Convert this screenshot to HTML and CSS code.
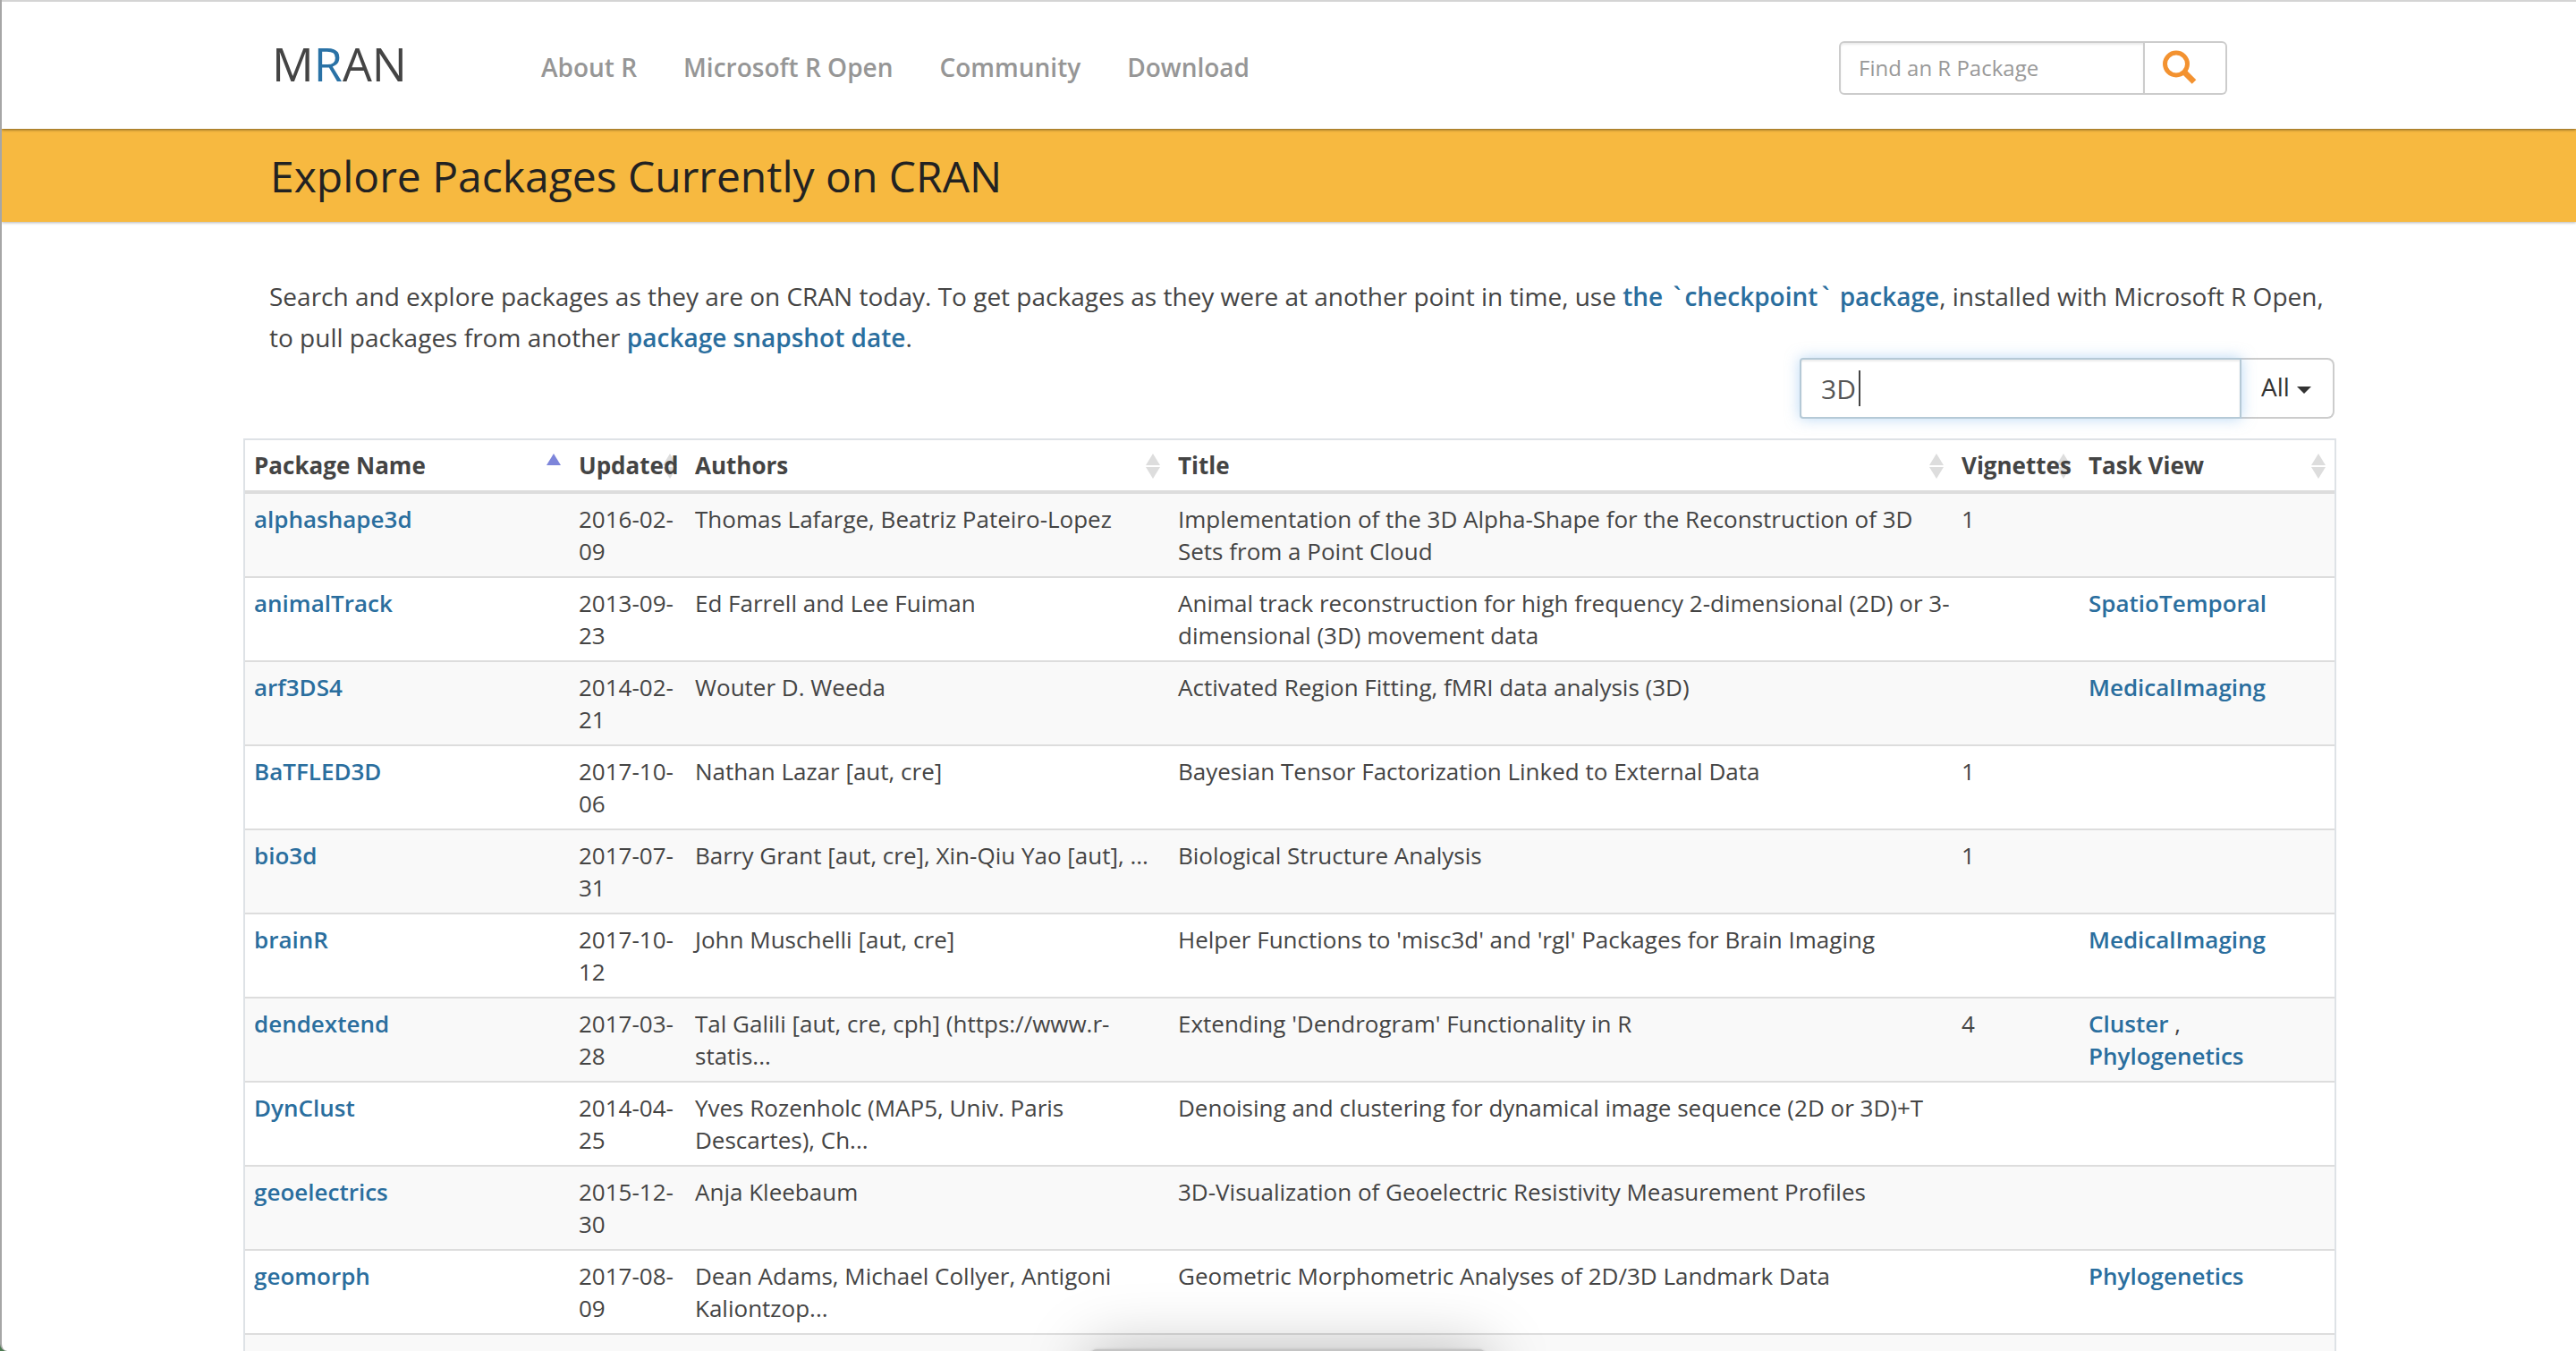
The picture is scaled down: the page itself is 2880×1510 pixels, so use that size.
FILE: index.html
```html
<!DOCTYPE html>
<html lang="en">
<head>
<meta charset="utf-8">
<title>Explore Packages Currently on CRAN</title>
<link rel="stylesheet" href="styles.css">
</head>
<body>
<div class="window">
  <header class="site-header">
    <div class="container header-row">
      <a class="logo" href="#">M<span class="logo-accent">R</span>AN</a>
      <nav class="main-nav">
        <a href="#">About R</a>
        <a href="#">Microsoft R Open</a>
        <a href="#">Community</a>
        <a href="#">Download</a>
      </nav>
      <form class="site-search">
        <input type="text" placeholder="Find an R Package" aria-label="Find an R Package">
        <button type="button" aria-label="Search">
          <svg width="38" height="38" viewBox="0 0 38 38" fill="none" stroke="#f39230"><circle cx="15" cy="15.500" r="12.500" stroke-width="5"/><path d="M24 24.500L35 35.500" stroke-width="6.500"/></svg>
        </button>
      </form>
    </div>
  </header>

  <div class="banner">
    <div class="container"><h1>Explore Packages Currently on CRAN</h1></div>
  </div>

  <main class="container">
    <p class="intro">Search and explore packages as they are on CRAN today. To get packages as they were at another point in time, use <a href="#">the <span class="tick">`</span>checkpoint<span class="tick">`</span> package</a>, installed with Microsoft R Open, to pull packages from another <a href="#">package snapshot date</a>.</p>

    <form class="filter">
      <div class="filter-field">
        <input type="text" value="3D" aria-label="Filter packages">
        <span class="text-cursor"></span>
      </div>
      <div class="filter-scope">
        <select aria-label="Filter scope"><option>All</option></select>
        <span class="arrow-down"></span>
      </div>
    </form>

    <table class="packages">
      <colgroup><col class="c-name"><col class="c-date"><col class="c-authors"><col><col class="c-vignettes"><col class="c-task"></colgroup>
      <thead>
        <tr>
          <th class="sorted"><button type="button">Package Name</button></th>
          <th><button type="button">Updated</button></th>
          <th><button type="button">Authors</button></th>
          <th><button type="button">Title</button></th>
          <th><button type="button">Vignettes</button></th>
          <th><button type="button">Task View</button></th>
        </tr>
      </thead>
      <tbody>
        <tr><td><a href="#">alphashape3d</a></td><td>2016-02-<wbr>09</td><td>Thomas Lafarge, Beatriz Pateiro-Lopez</td><td>Implementation of the 3D Alpha-Shape for the Reconstruction of 3D Sets from a Point Cloud</td><td>1</td><td></td></tr>
        <tr><td><a href="#">animalTrack</a></td><td>2013-09-<wbr>23</td><td>Ed Farrell and Lee Fuiman</td><td>Animal track reconstruction for high frequency 2-dimensional (2D) or 3-<wbr>dimensional (3D) movement data</td><td></td><td><a href="#">SpatioTemporal</a></td></tr>
        <tr><td><a href="#">arf3DS4</a></td><td>2014-02-<wbr>21</td><td>Wouter D. Weeda</td><td>Activated Region Fitting, fMRI data analysis (3D)</td><td></td><td><a href="#">MedicalImaging</a></td></tr>
        <tr><td><a href="#">BaTFLED3D</a></td><td>2017-10-<wbr>06</td><td>Nathan Lazar [aut, cre]</td><td>Bayesian Tensor Factorization Linked to External Data</td><td>1</td><td></td></tr>
        <tr><td><a href="#">bio3d</a></td><td>2017-07-<wbr>31</td><td>Barry Grant [aut, cre], Xin-Qiu Yao [aut], ...</td><td>Biological Structure Analysis</td><td>1</td><td></td></tr>
        <tr><td><a href="#">brainR</a></td><td>2017-10-<wbr>12</td><td>John Muschelli [aut, cre]</td><td>Helper Functions to 'misc3d' and 'rgl' Packages for Brain Imaging</td><td></td><td><a href="#">MedicalImaging</a></td></tr>
        <tr><td><a href="#">dendextend</a></td><td>2017-03-<wbr>28</td><td>Tal Galili [aut, cre, cph] (https://www.r-<wbr>statis...</td><td>Extending 'Dendrogram' Functionality in R</td><td>4</td><td><a href="#">Cluster</a> , <a href="#">Phylogenetics</a></td></tr>
        <tr><td><a href="#">DynClust</a></td><td>2014-04-<wbr>25</td><td>Yves Rozenholc (MAP5, Univ. Paris Descartes), Ch...</td><td>Denoising and clustering for dynamical image sequence (2D or 3D)+T</td><td></td><td></td></tr>
        <tr><td><a href="#">geoelectrics</a></td><td>2015-12-<wbr>30</td><td>Anja Kleebaum</td><td>3D-Visualization of Geoelectric Resistivity Measurement Profiles</td><td></td><td></td></tr>
        <tr><td><a href="#">geomorph</a></td><td>2017-08-<wbr>09</td><td>Dean Adams, Michael Collyer, Antigoni Kaliontzop...</td><td>Geometric Morphometric Analyses of 2D/3D Landmark Data</td><td></td><td><a href="#">Phylogenetics</a></td></tr>
        <tr class="next-row"><td></td><td></td><td></td><td></td><td></td><td></td></tr>
      </tbody>
    </table>
  </main>
  <div class="dock-shadow"></div>
</div>
</body>
</html>
```
FILE: styles.css
```css
* { box-sizing: border-box; }

body {
  margin: 0;
  background: #4c7a50;
  color: #444;
  font: 26px/36px "Open Sans", "Noto Sans", sans-serif;
}

a { color: #2a6e9e; font-weight: 600; text-decoration: none; }

input, button, select { margin: 0; font: inherit; color: inherit; }

.window {
  position: relative;
  height: 100vh;
  overflow: hidden;
  background: #fff;
  border-left: 2px solid #a6a6a6;
  border-bottom-left-radius: 8px;
}

.container {
  max-width: 2342px;
  margin: 0 auto;
  padding-left: 2px;
}

/* Header */
.site-header {
  position: relative;
  border-top: 2px solid #d4d4d4;
  background: #fff;
  box-shadow: 0 1px 3px rgba(0, 0, 0, .5);
}

.header-row {
  display: flex;
  align-items: center;
  height: 142px;
  padding-left: 34px;
  padding-right: 122px;
}

.logo {
  width: 301px;
  padding-bottom: 4px;
  color: #444;
  font-size: 52px;
  font-weight: 500;
  line-height: 72px;
}

.logo-accent { color: #2a72a6; }

.main-nav { display: flex; gap: 52px; flex: 1; padding-top: 4px; }
.main-nav a { color: #969696; font-size: 28px; }

.site-search { display: flex; width: 434px; height: 60px; padding: 0; margin-top: 6px; }

.site-search input {
  flex: 1;
  min-width: 0;
  padding: 0 20px;
  border: 2px solid #ccc;
  border-radius: 6px 0 0 6px;
  font-size: 24px;
  box-shadow: inset 0 2px 2px rgba(0, 0, 0, .075);
}
.site-search input::placeholder { color: #999; opacity: 1; }

.site-search button {
  width: 92px;
  padding: 8px 0 0 20px;
  border: 2px solid #ccc;
  border-left: 0;
  border-radius: 0 6px 6px 0;
  background: #fff;
  text-align: left;
}
.site-search svg { display: block; height: 38px; margin-top: -10px; }

/* Page title */
.banner { background: #f7b940; box-shadow: 0 1px 3px rgba(0, 0, 0, .3); }
.banner .container { padding: 20px 32px 18px; }
.banner h1 { margin: 0; color: #222; font-size: 48px; font-weight: 400; line-height: 66px; }

.intro { margin: 60px 0 0; padding: 0 0 0 29px; font-size: 28px; line-height: 46px; }
.tick { margin: 0 4px; }

/* Package filter */
.filter { display: flex; justify-content: flex-end; height: 68px; margin-right: 2px; }

.filter-field { position: relative; width: 494px; z-index: 1; }
.filter-field input {
  width: 100%;
  height: 68px;
  padding: 0 22px;
  border: 2px solid #b5c9d6;
  border-radius: 4px 0 0 4px;
  outline: 0;
  background: #fff;
  color: #555;
  font-size: 30px;
  box-shadow: inset 0 2px 2px rgba(0, 0, 0, .075), 0 0 16px rgba(120, 180, 235, .5);
}
.text-cursor { position: absolute; left: 66px; top: 14px; width: 2px; height: 40px; background: #444; }

.filter-scope { position: relative; width: 104px; }
.filter-scope select {
  width: 100%;
  height: 68px;
  padding: 0 0 4px 22px;
  border: 2px solid #ccc;
  border-left: 0;
  border-radius: 0 8px 8px 0;
  background: #fff;
  color: #333;
  font-size: 28px;
  appearance: none;
}
.arrow-down {
  position: absolute;
  right: 26px;
  top: 32px;
  border: 8px solid transparent;
  border-top-color: #333;
  border-bottom: 0;
  pointer-events: none;
}

/* Package list */
.packages {
  width: 100%;
  margin-top: 22px;
  border: 2px solid #dee2e6;
  border-spacing: 0;
  table-layout: fixed;
}
.c-name { width: 363px; }
.c-date { width: 130px; }
.c-authors { width: 540px; }
.c-vignettes { width: 142px; }
.c-task { width: 285px; }

th {
  position: relative;
  z-index: 0;
  padding: 10px;
  border-bottom: 4px solid #ddd;
  text-align: left;
  white-space: nowrap;
}
th button {
  display: block;
  padding: 0;
  border: 0;
  background: none;
  font-weight: 700;
}
th::before, th::after {
  content: "";
  position: absolute;
  z-index: -1;
  right: 10px;
  border: 8px solid transparent;
}
th::before { top: 15px; border-top: 0; border-bottom: 13px solid #ddd; }
th::after { top: 30px; border-bottom: 0; border-top: 13px solid #ddd; }
th.sorted::before { border-bottom-color: #7d85da; }
th.sorted::after { content: none; }

td { padding: 10px 2px 10px 10px; border-top: 2px solid #ddd; vertical-align: top; }
tbody tr:first-child td { border-top: 0; }
tbody tr:nth-child(odd) { background: #f9f9f9; }
.next-row td { height: 94px; }

/* Soft shadow of the dock peeking in from below */
.dock-shadow {
  position: absolute;
  left: calc(50% - 224px);
  bottom: -158px;
  width: 446px;
  height: 160px;
  border-radius: 10px;
  background: #c4c4c4;
  box-shadow: 0 0 3px rgba(0, 0, 0, .15), 0 0 70px rgba(0, 0, 0, .25);
}
```
